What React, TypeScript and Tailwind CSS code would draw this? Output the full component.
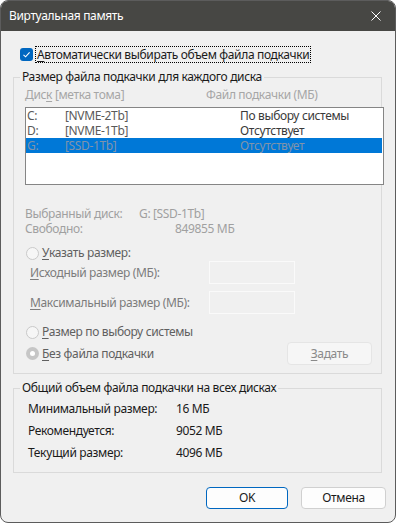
import React from 'react';

const font = "font-['Noto_Sans'] text-[12px] leading-[16px] tracking-[-0.35px]";

function U({ ch, rest }: { ch: string; rest: string }) {
  return (
    <span>
      <span className="underline underline-offset-2">{ch}</span>
      {rest}
    </span>
  );
}

function Radio({ checked }: { checked?: boolean }) {
  return checked ? (
    <span className="w-[13px] h-[13px] rounded-full bg-[#c6c6c6] flex items-center justify-center shrink-0">
      <span className="w-[5px] h-[5px] rounded-full bg-white" />
    </span>
  ) : (
    <span className="w-[13px] h-[13px] rounded-full border border-[#c9c9c9] bg-[#f6f6f6] shrink-0" />
  );
}

const drives = [
  { letter: 'C:', label: '[NVME-2Tb]', size: 'По выбору системы' },
  { letter: 'D:', label: '[NVME-1Tb]', size: 'Отсутствует' },
  { letter: 'G:', label: '[SSD-1Tb]', size: 'Отсутствует', selected: true },
];

export default function App() {
  return (
    <div className={`w-[396px] h-[523px] bg-white ${font}`}>
      <div className="w-[396px] h-[523px] rounded-lg border border-[#5c5c5c] bg-[#f0f0f0] overflow-hidden flex flex-col">
        {/* title bar */}
        <div className="h-[30px] shrink-0 bg-[#474744] flex items-center justify-between pl-[8px] pr-[14px] text-white">
          <span>Виртуальная память</span>
          <svg width="10" height="10" viewBox="0 0 10 10" className="text-white">
            <path d="M0.5 0.5 L9.5 9.5 M9.5 0.5 L0.5 9.5" stroke="currentColor" strokeWidth="1" />
          </svg>
        </div>

        {/* auto checkbox */}
        <div className="mt-[15px] ml-[19px] h-[17px] flex items-center gap-[2px] text-[#1a1a1a]">
          <span className="w-[13px] h-[13px] rounded-[3px] bg-[#0067c0] flex items-center justify-center">
            <svg width="9" height="9" viewBox="0 0 9 9">
              <path d="M1.5 4.8 L3.6 6.8 L7.6 2.4" fill="none" stroke="white" strokeWidth="1.1" />
            </svg>
          </span>
          <span className="border border-dotted border-black px-[1px] h-[17px] flex items-center">
            <U ch="А" rest="втоматически выбирать объем файла подкачки" />
          </span>
        </div>

        {/* per-disk group */}
        <fieldset className="mt-[6px] ml-[12px] w-[369px] border border-[#dadada] pb-[8px] min-w-0">
          <legend className="ml-[6px] px-[2px] text-[#1a1a1a]">Размер файла подкачки для каждого диска</legend>

          <div className="mt-[2px] ml-[11px] flex text-[#a6a6a6]">
            <span className="w-[181px]">
              Дис<span className="underline underline-offset-2">к</span> [метка тома]
            </span>
            <span>Файл подкачки (МБ)</span>
          </div>

          <div className="mt-[4px] ml-[11px] w-[359px] h-[78px] border border-[#858585] bg-white flex flex-col">
            {drives.map((d) => (
              <div
                key={d.letter}
                className={`h-[15px] flex items-center leading-[15px] ${
                  d.selected ? 'bg-[#0078d7] text-[#8194aa] mr-[1px]' : 'text-[#5a5a5a]'
                }`}
              >
                <span className="w-[39px] pl-[1px]">{d.letter}</span>
                <span className="w-[175px]">{d.label}</span>
                <span className={d.selected ? '' : 'text-[#3a3a3a]'}>{d.size}</span>
              </div>
            ))}
          </div>

          <div className="mt-[21px] ml-[11px] text-[#a0a0a0] leading-[15px]">
            <div className="flex h-[15px]">
              <span className="w-[114px]">Выбранный диск:</span>
              <span className="w-[14px]">G:</span>
              <span>[SSD-1Tb]</span>
            </div>
            <div className="flex h-[15px]">
              <span className="w-[150px]">Свободно:</span>
              <span>849855 МБ</span>
            </div>
          </div>

          <div className="mt-[9px] ml-[12px] h-[16px] flex items-center gap-[3px] text-[#606060]">
            <Radio />
            <U ch="У" rest="казать размер:" />
          </div>

          <div className="ml-[16px] h-[23px] flex items-center text-[#7c7c7c]">
            <span className="w-[179px]">
              <U ch="И" rest="сходный размер (МБ):" />
            </span>
            <span className="w-[86px] h-[23px] border border-[#fafafa]" />
          </div>

          <div className="mt-[7px] ml-[16px] h-[23px] flex items-center text-[#7c7c7c]">
            <span className="w-[179px]">
              <U ch="М" rest="аксимальный размер (МБ):" />
            </span>
            <span className="w-[86px] h-[23px] border border-[#fafafa]" />
          </div>

          <div className="mt-[10px] ml-[12px] h-[16px] flex items-center gap-[3px] text-[#606060]">
            <Radio />
            <U ch="Р" rest="азмер по выбору системы" />
          </div>

          <div className="mt-[2px] ml-[12px] h-[23px] flex items-center text-[#606060]">
            <div className="flex items-center gap-[3px] w-[261px]">
              <Radio checked />
              <U ch="Б" rest="ез файла подкачки" />
            </div>
            <span className="w-[85px] h-[23px] rounded-[4px] border border-[#e5e5e5] bg-[#f6f6f6] flex items-center justify-center text-[#8a8a8a]">
              <U ch="З" rest="адать" />
            </span>
          </div>
        </fieldset>

        {/* total group */}
        <fieldset className="mt-[6px] ml-[12px] w-[369px] border border-[#dadada] pt-[5px] pb-[11px] min-w-0">
          <legend className="ml-[6px] px-[2px] text-[#1a1a1a]">Общий объем файла подкачки на всех дисках</legend>
          <div className="ml-[14px] flex flex-col gap-[6px] text-[#1a1a1a]">
            <div className="flex h-[16px]">
              <span className="w-[148px]">Минимальный размер:</span>
              <span>16 МБ</span>
            </div>
            <div className="flex h-[16px]">
              <span className="w-[148px]">Рекомендуется:</span>
              <span>9052 МБ</span>
            </div>
            <div className="flex h-[16px]">
              <span className="w-[148px]">Текущий размер:</span>
              <span>4096 МБ</span>
            </div>
          </div>
        </fieldset>

        {/* buttons */}
        <div className="mt-[14px] ml-[205px] flex gap-[13px] text-[#1a1a1a]">
          <button className="w-[82px] h-[22px] rounded-[4px] border border-[#0067c0] bg-[#fdfdfd] flex items-center justify-center">
            OK
          </button>
          <button className="w-[85px] h-[22px] rounded-[4px] border border-[#d0d0d0] bg-[#fdfdfd] flex items-center justify-center">
            Отмена
          </button>
        </div>
      </div>
    </div>
  );
}
